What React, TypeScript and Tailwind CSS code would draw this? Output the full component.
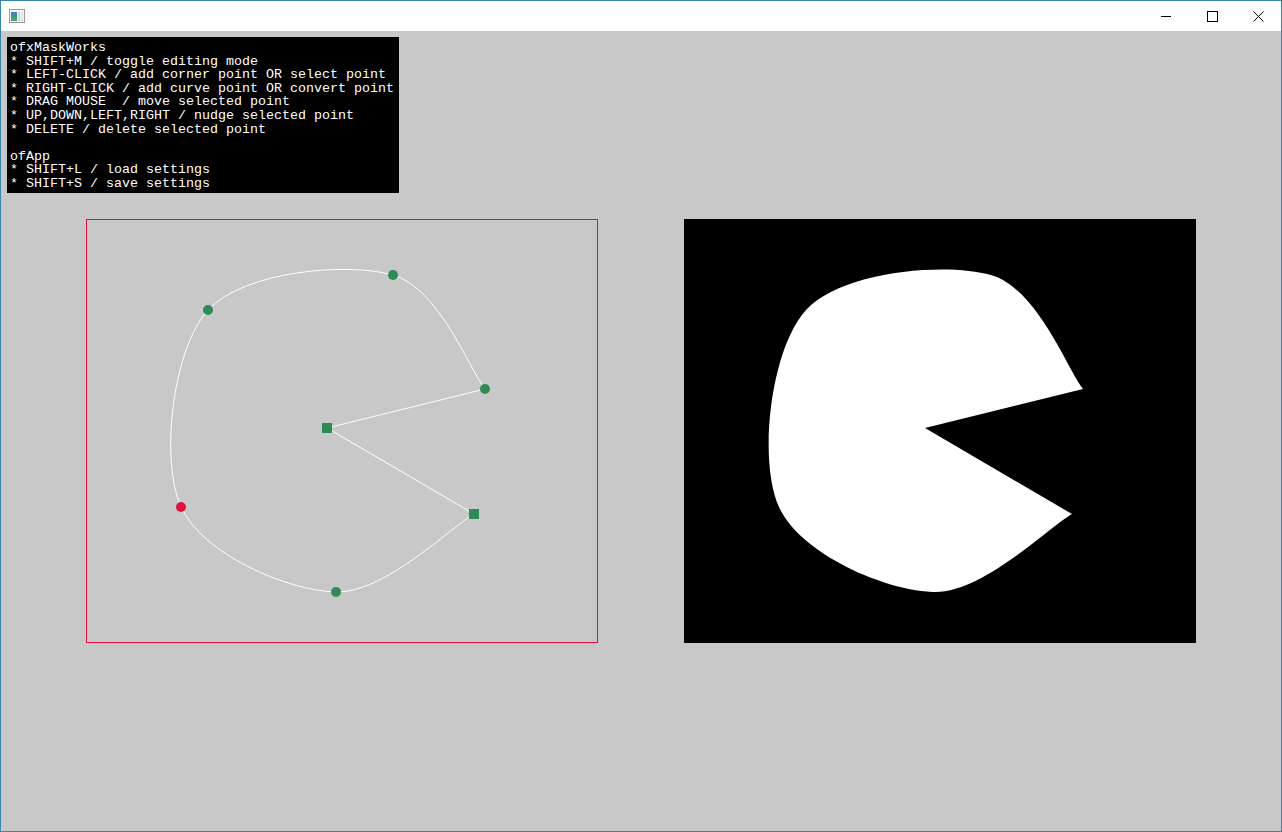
import React from "react";

const SHAPE =
  "M95,288 C116.33,335 201.17,371.83 250,373 C298.83,374.17 365,308 388,295 L241,209 L399,170 C383.67,151 353.17,69.17 307,56 C260.83,42.83 157.33,52.33 122,91 C86.67,129.67 73.67,241 95,288 Z";

const curvePoints = [
  { x: 122, y: 91 },
  { x: 307, y: 56 },
  { x: 399, y: 170 },
  { x: 250, y: 373 },
];
const cornerPoints = [
  { x: 241, y: 209 },
  { x: 388, y: 295 },
];
const selected = { x: 95, y: 288 };

const helpLines = [
  "ofxMaskWorks",
  "* SHIFT+M / toggle editing mode",
  "* LEFT-CLICK / add corner point OR select point",
  "* RIGHT-CLICK / add curve point OR convert point",
  "* DRAG MOUSE  / move selected point",
  "* UP,DOWN,LEFT,RIGHT / nudge selected point",
  "* DELETE / delete selected point",
  "",
  "ofApp",
  "* SHIFT+L / load settings",
  "* SHIFT+S / save settings",
];

function AppIcon() {
  return (
    <svg width="16" height="14" viewBox="0 0 16 14">
      <defs>
        <linearGradient id="ig" x1="0" y1="0" x2="0" y2="1">
          <stop offset="0" stopColor="#3a7fc4" />
          <stop offset="1" stopColor="#4aa86a" />
        </linearGradient>
      </defs>
      <rect x="0.5" y="0.5" width="15" height="13" fill="#f4f4f4" stroke="#9a9a9a" />
      <rect x="2" y="3" width="6" height="9" fill="url(#ig)" />
      <rect x="9" y="3" width="2" height="9" fill="#c9dbe6" />
      <rect x="12" y="3" width="2" height="9" fill="#e2e2e2" />
    </svg>
  );
}

function TitleBar() {
  return (
    <div className="flex h-[30px] items-center bg-white">
      <div className="ml-[8px] flex">
        <AppIcon />
      </div>
      <div className="flex-1" />
      <div className="flex h-full">
        <div className="flex w-[46px] items-center justify-center">
          <svg width="10" height="10" viewBox="0 0 10 10">
            <line x1="0" y1="5.5" x2="10" y2="5.5" stroke="#000" strokeWidth="1" />
          </svg>
        </div>
        <div className="flex w-[46px] items-center justify-center">
          <svg width="11" height="11" viewBox="0 0 11 11">
            <rect x="0.5" y="0.5" width="10" height="10" fill="none" stroke="#000" strokeWidth="1" />
          </svg>
        </div>
        <div className="flex w-[46px] items-center justify-center">
          <svg width="11" height="11" viewBox="0 0 11 11">
            <path d="M0.5 0.5 L10.5 10.5 M10.5 0.5 L0.5 10.5" stroke="#000" strokeWidth="1" />
          </svg>
        </div>
      </div>
    </div>
  );
}

function HelpBox() {
  return (
    <div
      className="ml-[6px] mt-[6px] w-[392px] h-[156px] bg-black pl-[3px] pt-[4px] text-white text-[13.33px] leading-[13.6px] whitespace-pre"
      style={{ fontFamily: '"Liberation Mono", "DejaVu Sans Mono", monospace' }}
    >
      {helpLines.map((l, i) => (
        <div key={i} className="h-[13.6px]">
          {l}
        </div>
      ))}
    </div>
  );
}

function EditorCanvas() {
  return (
    <div className="w-[512px] h-[424px] border border-[#dc143c]">
      <svg width="510" height="422" viewBox="1 1 510 422" className="block">
        <path d={SHAPE} fill="none" stroke="#ffffff" strokeWidth="1" />
        {curvePoints.map((p, i) => (
          <circle key={i} cx={p.x} cy={p.y} r="5" fill="#2e8b57" />
        ))}
        {cornerPoints.map((p, i) => (
          <rect key={i} x={p.x - 5} y={p.y - 5} width="10" height="10" fill="#2e8b57" />
        ))}
        <circle cx={selected.x} cy={selected.y} r="5" fill="#dc143c" />
      </svg>
    </div>
  );
}

function MaskPreview() {
  return (
    <div className="w-[512px] h-[424px] bg-black">
      <svg width="512" height="424" viewBox="0 0 512 424" className="block">
        <path d={SHAPE} fill="#ffffff" />
      </svg>
    </div>
  );
}

export default function App() {
  return (
    <div className="flex h-[832px] w-[1282px] flex-col overflow-hidden border border-[#3a86a6] bg-[#c8c8c8]">
      <TitleBar />
      <div className="flex flex-1 flex-col">
        <HelpBox />
        <div className="mt-[26px] flex gap-[86px] pl-[85px]">
          <EditorCanvas />
          <MaskPreview />
        </div>
      </div>
    </div>
  );
}
